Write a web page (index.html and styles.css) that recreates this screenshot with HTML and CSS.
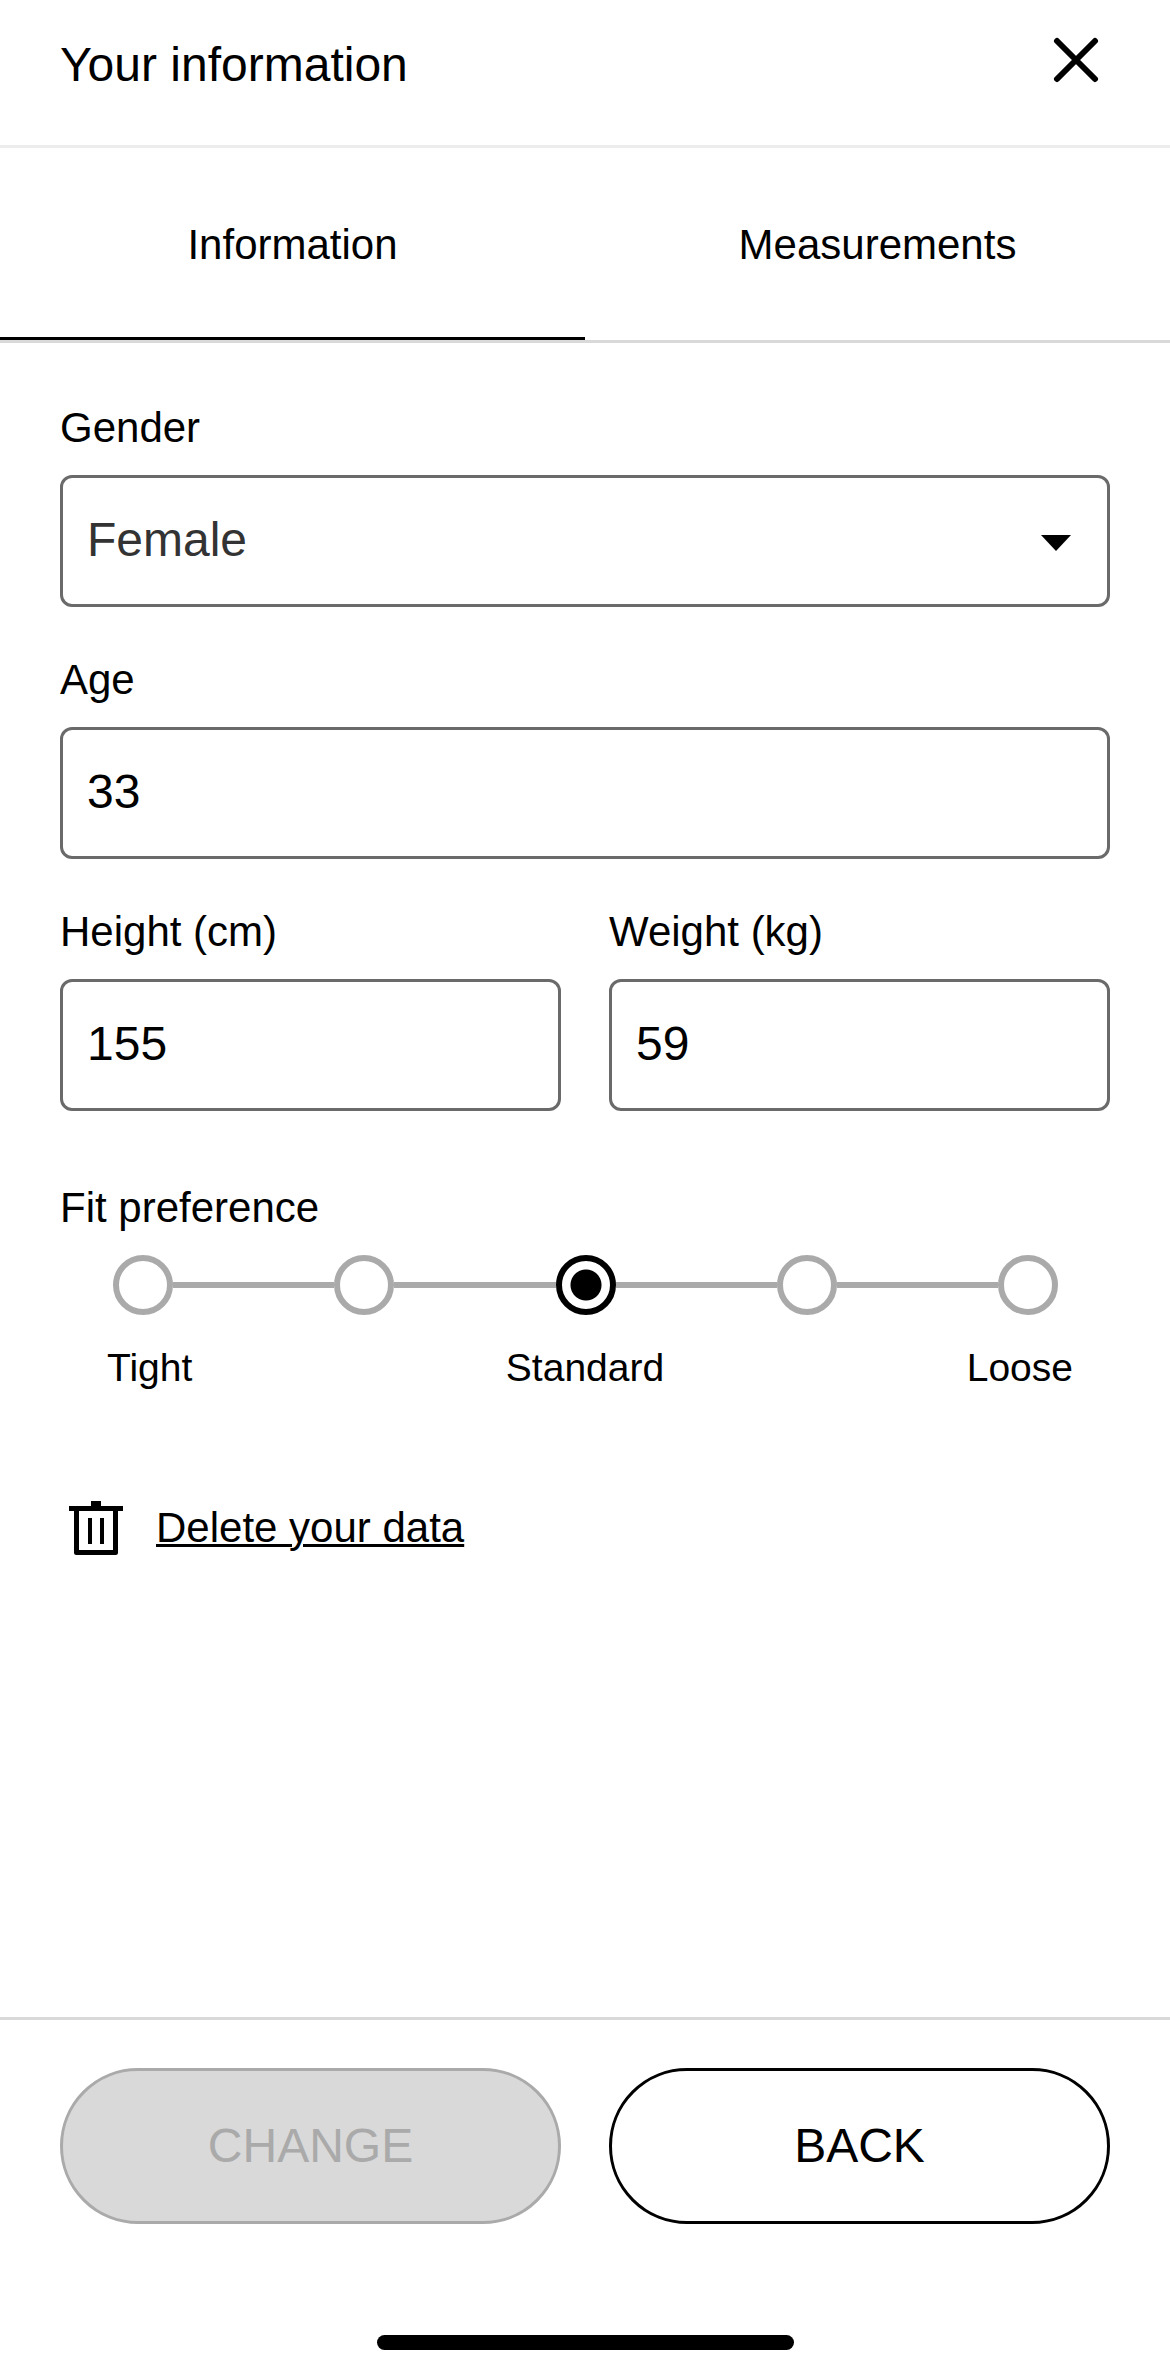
FILE: index.html
```html
<!DOCTYPE html>
<html lang="en">
	<head>
		<meta charset="UTF-8">
		<meta name="viewport" content="width=device-width">
		<title>Your information</title>
		<link rel="stylesheet" href="styles.css">
	</head>
	<body>
		<div class="page">
			<header class="header">
				<h1 class="title">Your information</h1>
				<button type="button" class="close" aria-label="Close">
					<svg width="46" height="46" viewBox="0 0 46 46"><path d="M4 4L42 42M42 4L4 42" stroke="#000" stroke-width="6" stroke-linecap="round"/></svg>
				</button>
			</header>
			<nav class="tabs">
				<button type="button" class="tab active">Information</button>
				<button type="button" class="tab">Measurements</button>
			</nav>
			<main class="main">
				<form class="form" id="form">
					<div class="field">
						<label for="gender">Gender</label>
						<div class="select">
							<select id="gender" class="box">
								<option selected>Female</option>
								<option>Male</option>
							</select>
							<svg class="arrow" width="30" height="16" viewBox="0 0 30 16"><path d="M0 0H30L15 16Z"/></svg>
						</div>
					</div>
					<div class="field">
						<label for="age">Age</label>
						<input id="age" class="box" type="text" inputmode="numeric" value="33">
					</div>
					<div class="row">
						<div class="field">
							<label for="height">Height (cm)</label>
							<input id="height" class="box" type="text" inputmode="numeric" value="155">
						</div>
						<div class="field">
							<label for="weight">Weight (kg)</label>
							<input id="weight" class="box" type="text" inputmode="numeric" value="59">
						</div>
					</div>
					<fieldset class="fit">
						<legend>Fit preference</legend>
						<div class="steps">
							<input type="radio" name="fit" id="fit1">
							<span class="line"></span>
							<input type="radio" name="fit" id="fit2" aria-label="Slightly tight">
							<span class="line"></span>
							<input type="radio" name="fit" id="fit3" checked>
							<span class="line"></span>
							<input type="radio" name="fit" id="fit4" aria-label="Slightly loose">
							<span class="line"></span>
							<input type="radio" name="fit" id="fit5">
						</div>
						<div class="names">
							<label for="fit1">Tight</label>
							<label for="fit3">Standard</label>
							<label for="fit5">Loose</label>
						</div>
					</fieldset>
				</form>
				<div class="delete">
					<svg width="54" height="54" viewBox="0 0 54 54">
						<path d="M22 0H32V6H22Z"/>
						<path d="M0 5H54V10H0Z"/>
						<path d="M7.5 8V51.5H46.5V8" fill="none" stroke="#000" stroke-width="5" stroke-linejoin="round"/>
						<path d="M19 17H23V43H19ZM31 17H35V43H31Z"/>
					</svg>
					<a href="#">Delete your data</a>
				</div>
			</main>
			<footer class="footer">
				<div class="row">
					<button type="submit" form="form" class="btn" disabled>CHANGE</button>
					<button type="button" class="btn">BACK</button>
				</div>
				<div class="home"></div>
			</footer>
		</div>
	</body>
</html>
```

FILE: styles.css
```css
* {
	box-sizing: border-box;
}
body {
	margin: 0;
	background: #fff;
	color: #000;
	font-family: Arial, "Liberation Sans", sans-serif;
	font-size: 42px;
	line-height: 60px;
}
button, input, select {
	margin: 0;
	font: inherit;
	color: inherit;
}
button {
	padding: 0;
	border: none;
	background: none;
}
svg {
	display: block;
}
.page {
	display: flex;
	flex-direction: column;
	min-height: 100vh;
}
.header {
	display: flex;
	justify-content: space-between;
	align-items: flex-start;
	padding: 35px 60px 50px;
	border-bottom: 3px solid #ececec;
}
.title {
	margin: 0;
	font-size: 48px;
	font-weight: normal;
}
.close {
	padding: 2px 11px;
}
.tabs {
	display: flex;
	border-bottom: 3px solid #d9d9d9;
}
.tab {
	flex: 1;
	padding: 67px 0 62px;
	border-bottom: 3px solid transparent;
}
.tab.active {
	border-color: #000;
}
.main {
	padding: 55px 60px;
}
.form {
	display: flex;
	flex-direction: column;
	gap: 43px;
}
.field {
	display: flex;
	flex-direction: column;
	gap: 17px;
}
.row {
	display: grid;
	grid-template-columns: 1fr 1fr;
	gap: 48px;
}
.box {
	width: 100%;
	height: 132px;
	padding: 0 24px 3px;
	border: 3px solid #6a6a6a;
	border-radius: 12px;
	background: #fff;
	font-size: 48px;
	appearance: none;
}
.select {
	display: grid;
	align-items: center;
}
.select .box, .arrow {
	grid-area: 1 / 1;
}
.select .box {
	color: #333;
}
.arrow {
	justify-self: end;
	margin: 3px 39px 0 0;
	pointer-events: none;
}

/* fit scale */
.fit {
	min-width: 0;
	margin: 24px 0 0;
	padding: 0;
	border: none;
}
.fit legend {
	padding: 0;
}
.steps {
	display: flex;
	align-items: center;
	margin-top: 17px;
	padding: 0 52px 0 53px;
}
.steps input {
	width: 60px;
	height: 60px;
	border: 6px solid #aaa;
	border-radius: 50%;
	appearance: none;
}
.steps input:checked {
	border-color: #000;
	background: radial-gradient(circle, #000 15px, transparent 16px);
}
.line {
	flex: 1;
	height: 6px;
	background: #aaa;
}
.names {
	display: grid;
	grid-template-columns: 1fr 1fr 1fr;
	margin-top: 24px;
	padding: 0 37px;
	font-size: 39px;
	line-height: 57px;
	text-align: center;
}
.names label:first-child {
	padding-left: 10px;
	text-align: left;
}
.names label:last-child {
	text-align: right;
}

.delete {
	display: flex;
	align-items: center;
	gap: 33px;
	height: 72px;
	margin-top: 96px;
	padding-left: 9px;
}
.delete a {
	color: #000;
	text-decoration-thickness: 3px;
}
.footer {
	margin-top: auto;
	padding: 48px 60px 24px;
	border-top: 3px solid #d9d9d9;
}
.btn {
	height: 156px;
	border: 3px solid #000;
	border-radius: 78px;
	font-size: 48px;
}
.btn:disabled {
	border-color: #aaa;
	background: #d9d9d9;
	color: #aaa;
}
.home {
	width: 417px;
	height: 15px;
	margin: 111px auto 0;
	border-radius: 8px;
	background: #000;
}
```
